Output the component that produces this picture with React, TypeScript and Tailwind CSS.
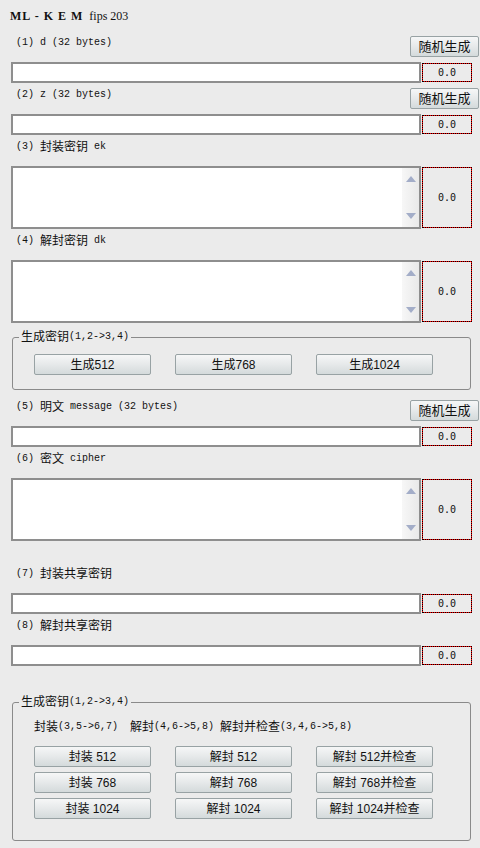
import React from "react";

const mono = "font-['Liberation_Mono','Noto_Sans_CJK_SC',monospace]";
const ui = "font-['Liberation_Sans','Noto_Sans_CJK_SC',sans-serif]";

function Cjk({ children }: { children: React.ReactNode }) {
  return <span className={`${ui} text-[12px] leading-[14px]`}>{children}</span>;
}

function Btn({ children, className = "" }: { children: React.ReactNode; className?: string }) {
  return (
    <button
      className={`${ui} h-[21px] rounded-[2px] border border-[#98a2a4] bg-gradient-to-b from-[#f6f7f7] via-[#e6e9ea] to-[#d4dadb] text-[12px] leading-none text-[#111] ${className}`}
    >
      {children}
    </button>
  );
}

// red frame with black dots showing through the dotted border
function Gauge({ tall = false }: { tall?: boolean }) {
  return (
    <div
      className={`ml-px mt-px w-[50px] border border-dotted border-black bg-[#ff0000] ${tall ? "h-[61px]" : "h-[19px]"}`}
    >
      <div className="flex h-full w-full items-center justify-center bg-[#ebebeb] font-['DejaVu_Sans_Mono',monospace] text-[10px] text-[#111]">
        0.0
      </div>
    </div>
  );
}

function Label({ children, random = false }: { children: React.ReactNode; random?: boolean }) {
  return (
    <div className="flex h-[20px] items-start justify-between">
      <div className={`${mono} flex h-[12px] items-center whitespace-pre pl-[5px] pt-px text-[10px] leading-[12px] text-[#111]`}>
        {children}
      </div>
      {random && <Btn className="h-[20px] w-[69px] text-[13px]">随机生成</Btn>}
    </div>
  );
}

function LineField() {
  return (
    <div className="mt-[6px] flex items-start">
      <div className="h-[21px] w-[410px] border-2 border-[#8e8e8e] bg-white" />
      <Gauge />
    </div>
  );
}

function AreaField() {
  return (
    <div className="mt-[6px] flex items-start">
      <div className="flex h-[63px] w-[410px] border-2 border-[#8e8e8e] bg-white">
        <div className="flex-1" />
        <div className="flex w-[17px] flex-col items-center justify-between bg-gradient-to-r from-[#f7f7f7] to-[#e9e9e9] py-[8px]">
          <svg width="10" height="6" viewBox="0 0 10 6">
            <path d="M5 0 L10 6 L0 6 Z" fill="#a3adc8" />
          </svg>
          <svg width="10" height="6" viewBox="0 0 10 6">
            <path d="M0 0 L10 0 L5 6 Z" fill="#a3adc8" />
          </svg>
        </div>
      </div>
      <Gauge tall />
    </div>
  );
}

function Legend() {
  return (
    <legend className="ml-[6px] h-[14px] px-[2px] leading-[14px]">
      <div className="flex h-[14px] items-center">
        <Cjk>生成密钥</Cjk>
        <span className={`${mono} text-[10px] leading-[14px]`}>(1,2-&gt;3,4)</span>
      </div>
    </legend>
  );
}

export default function App() {
  const rows = [
    ["封装 512", "解封 512", "解封 512并检查"],
    ["封装 768", "解封 768", "解封 768并检查"],
    ["封装 1024", "解封 1024", "解封 1024并检查"],
  ];

  return (
    <div className="h-[848px] w-[480px] overflow-hidden bg-[#ebebeb] pl-[11px] pr-px text-[#111]">
      <div className="-ml-px h-[36px] pt-[9px] font-['Liberation_Serif',serif] text-[12px] leading-[14px]">
        <span className="font-bold tracking-[1px]">ML - K E M</span>&nbsp; <span>fips 203</span>
      </div>

      <Label random>(1) d (32 bytes)</Label>
      <LineField />

      <div className="mt-[5px]">
        <Label random>(2) z (32 bytes)</Label>
        <LineField />
      </div>

      <div className="mt-[5px]">
        <Label>
          (3) <Cjk>封装密钥</Cjk> ek
        </Label>
        <AreaField />
      </div>

      <div className="mt-[5px]">
        <Label>
          (4) <Cjk>解封密钥</Cjk> dk
        </Label>
        <AreaField />
      </div>

      <fieldset className="ml-px mt-[7px] w-[459px] rounded-[3px] border border-[#8a8a8a]">
        <Legend />
        <div className="flex gap-[24px] pb-[14px] pl-[21px] pt-[10px]">
          <Btn className="w-[117px]">生成512</Btn>
          <Btn className="w-[117px]">生成768</Btn>
          <Btn className="w-[117px]">生成1024</Btn>
        </div>
      </fieldset>

      <div className="mt-[10px]">
        <Label random>
          (5) <Cjk>明文</Cjk> message (32 bytes)
        </Label>
        <LineField />
      </div>

      <div className="mt-[5px]">
        <Label>
          (6) <Cjk>密文</Cjk> cipher
        </Label>
        <AreaField />
      </div>

      <div className="mt-[26px]">
        <Label>
          (7) <Cjk>封装共享密钥</Cjk>
        </Label>
        <LineField />
      </div>

      <div className="mt-[5px]">
        <Label>
          (8) <Cjk>解封共享密钥</Cjk>
        </Label>
        <LineField />
      </div>

      <fieldset className="ml-px mt-[29px] w-[459px] rounded-[3px] border border-[#8a8a8a]">
        <Legend />
        <div className="pb-[21px] pl-[21px] pt-[11px]">
          <div className="flex h-[14px] items-center whitespace-pre">
            <Cjk>封装</Cjk>
            <span className={`${mono} text-[10px] leading-[14px]`}>(3,5-&gt;6,7)  </span>
            <Cjk>解封</Cjk>
            <span className={`${mono} text-[10px] leading-[14px]`}>(4,6-&gt;5,8) </span>
            <Cjk>解封并检查</Cjk>
            <span className={`${mono} text-[10px] leading-[14px]`}>(3,4,6-&gt;5,8)</span>
          </div>
          <div className="mt-[12px] flex flex-col gap-[5px]">
            {rows.map((r) => (
              <div key={r[0]} className="flex gap-[24px]">
                {r.map((t) => (
                  <Btn key={t} className="w-[117px]">
                    {t}
                  </Btn>
                ))}
              </div>
            ))}
          </div>
        </div>
      </fieldset>
    </div>
  );
}
